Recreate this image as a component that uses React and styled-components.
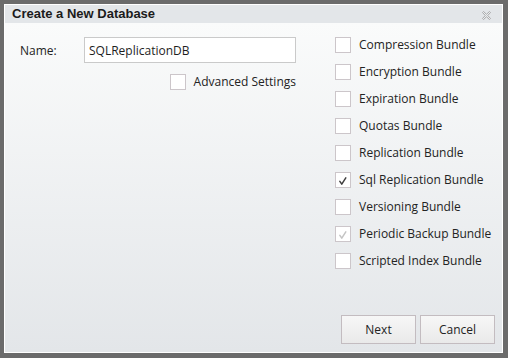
import styled, { createGlobalStyle } from "styled-components";

const GlobalStyle = createGlobalStyle`
html, body {
  margin: 0;
  padding: 0;
  background: #6b6b6b;
}
* {
  box-sizing: border-box;
}
`;

const bundles = [
  { name: "Compression Bundle" },
  { name: "Encryption Bundle" },
  { name: "Expiration Bundle" },
  { name: "Quotas Bundle" },
  { name: "Replication Bundle" },
  { name: "Sql Replication Bundle", checked: true },
  { name: "Versioning Bundle" },
  { name: "Periodic Backup Bundle", checked: true, disabled: true },
  { name: "Scripted Index Bundle" },
];

function Check({ checked, disabled }) {
  return (
    <Box>
      {checked && (
        <svg width="16" height="16" viewBox="0 0 16 16">
          <path
            d="M4.4 8.4 L6.6 11.6 L11.2 4.4"
            fill="none"
            stroke={disabled ? "#c4c4c4" : "#3e3e3e"}
            strokeWidth="1.7"
            strokeLinejoin="round"
            strokeLinecap="round"
          />
        </svg>
      )}
    </Box>
  );
}

export default function App() {
  return (
    <>
      <GlobalStyle />
      <Dialog>
        <TitleBar>
          <Title>Create a New Database</Title>
          <Close>
            <svg width="9" height="9" viewBox="0 0 9 9">
              <path
                d="M0.5 1.5 L1.5 0.5 L4.5 3.3 L7.5 0.5 L8.5 1.5 L5.7 4.5 L8.5 7.5 L7.5 8.5 L4.5 5.7 L1.5 8.5 L0.5 7.5 L3.3 4.5 Z"
                fill="#eceeef"
                stroke="#a0a2a4"
                strokeWidth="0.9"
              />
            </svg>
          </Close>
        </TitleBar>
        <Body>
          <Content>
            <Form>
              <NameRow>
                <Label>Name:</Label>
                <Input defaultValue="SQLReplicationDB" />
              </NameRow>
              <AdvancedRow>
                <Check />
                <Text>Advanced Settings</Text>
              </AdvancedRow>
            </Form>
            <BundleList>
              {bundles.map((b) => (
                <BundleRow key={b.name}>
                  <Check checked={b.checked} disabled={b.disabled} />
                  <Text>{b.name}</Text>
                </BundleRow>
              ))}
            </BundleList>
          </Content>
          <Footer>
            <Button>Next</Button>
            <Button>Cancel</Button>
          </Footer>
        </Body>
      </Dialog>
    </>
  );
}

const Dialog = styled.div`
  margin: 4px 5px 5px 4px;
  width: 499px;
  height: 349px;
  border: 1px solid #ffffff;
  display: flex;
  flex-direction: column;
  font-family: "Open Sans", "Liberation Sans", sans-serif;
  font-size: 12px;
  color: #232323;
`;

const TitleBar = styled.div`
  height: 18px;
  background: #e3e6e9;
  display: flex;
  align-items: center;
  justify-content: space-between;
  padding: 0 11px 0 7px;
`;

const Title = styled.div`
  font-family: "Liberation Sans", Arial, sans-serif;
  font-weight: bold;
  font-size: 13px;
  color: #1b1b1b;
  line-height: 16px;
`;

const Close = styled.div`
  display: flex;
  margin-top: 2px;
`;

const Body = styled.div`
  flex: 1;
  display: flex;
  flex-direction: column;
  background: linear-gradient(#fafbfb, #e3e6e9);
`;

const Content = styled.div`
  flex: 1;
  display: flex;
  padding: 14px 0 0 15px;
`;

const Form = styled.div`
  width: 276px;
  display: flex;
  flex-direction: column;
`;

const NameRow = styled.div`
  display: flex;
  align-items: center;
`;

const Label = styled.span`
  width: 64px;
`;

const Input = styled.input`
  width: 212px;
  height: 26px;
  border: 1px solid #cacaca;
  background: #ffffff;
  padding: 0 4px;
  font-family: inherit;
  font-size: 12px;
  color: #1e1e1e;
  outline: none;
`;

const AdvancedRow = styled.div`
  display: flex;
  align-items: center;
  justify-content: flex-end;
  gap: 8px;
  margin-top: 11px;
`;

const BundleList = styled.div`
  margin-left: 39px;
  display: flex;
  flex-direction: column;
  gap: 11px;
`;

const BundleRow = styled.div`
  display: flex;
  align-items: center;
  gap: 8px;
  height: 16px;
`;

const Box = styled.span`
  width: 16px;
  height: 16px;
  flex: none;
  border: 1px solid #ccc6ca;
  background: #ffffff;
  display: flex;
`;

const Text = styled.span`
  line-height: 16px;
  white-space: nowrap;
`;

const Footer = styled.div`
  display: flex;
  justify-content: flex-end;
  gap: 4px;
  padding: 0 7px 8px 0;
`;

const Button = styled.button`
  width: 75px;
  height: 29px;
  border: 1px solid #c3bcc0;
  background: linear-gradient(#f7f7f7, #e9e9e9);
  font-family: inherit;
  font-size: 12px;
  color: #232323;
  padding: 0;
`;
